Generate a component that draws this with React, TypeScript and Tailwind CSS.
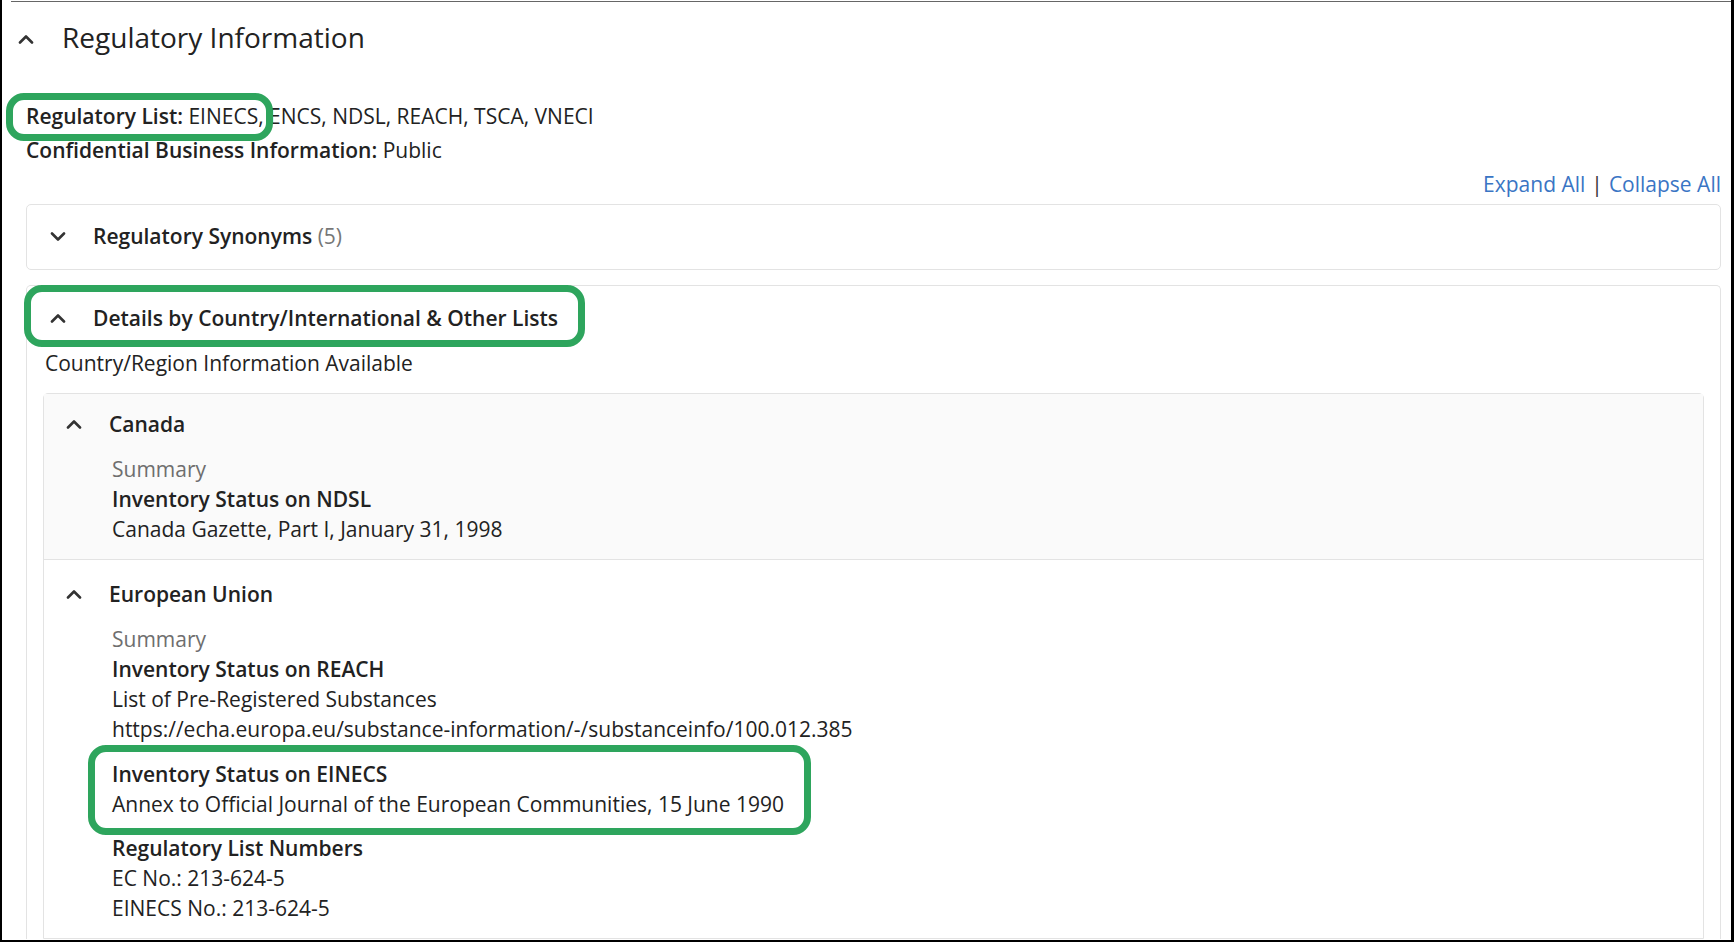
import React from "react";

function Chevron({ up = true, className = "" }: { up?: boolean; className?: string }) {
  return (
    <svg
      width="16"
      height="10"
      viewBox="0 0 16 10"
      fill="none"
      stroke="currentColor"
      strokeWidth="2.6"
      strokeLinecap="round"
      strokeLinejoin="round"
      className={className}
    >
      <path d={up ? "M2 8.5 8 2.5l6 6" : "M2 1.5l6 6 6-6"} />
    </svg>
  );
}

function Highlight({ className }: { className: string }) {
  return (
    <div
      className={`pointer-events-none absolute rounded-[18px] border-[7px] border-[#2ea55d] ${className}`}
    />
  );
}

function Entry({ title, lines }: { title: string; lines: string[] }) {
  return (
    <div>
      <div className="font-semibold">{title}</div>
      {lines.map((l) => (
        <div key={l}>{l}</div>
      ))}
    </div>
  );
}

export default function App() {
  return (
    <div className="relative h-[942px] w-full overflow-hidden border-b-2 border-l-2 border-r-[3px] border-black bg-white font-['Open_Sans',sans-serif] text-[#222]">
      <div className="ml-[9px] mt-[1px] h-px bg-[#666]" />

      <div className="pl-[24px] pr-[10px]">
        {/* section title */}
        <div className="-ml-[8px] mt-[15px] flex h-[40px] items-center">
          <Chevron className="mt-[3px] text-[#333]" />
          <h2 className="ml-[28px] text-[28px] leading-[40px]">Regulatory Information</h2>
        </div>

        {/* meta */}
        <div className="relative mt-[42px] text-[21px] leading-[34px]">
          <Highlight className="-left-[20px] -top-[6px] h-[48px] w-[267px]" />
          <div>
            <span className="font-semibold">Regulatory List:</span> EINECS, ENCS, NDSL, REACH, TSCA, VNECI
          </div>
          <div>
            <span className="font-semibold">Confidential Business Information:</span> Public
          </div>
        </div>

        <div className="flex justify-end text-[21px] leading-[34px] text-[#3a75c4]">
          <a href="#">Expand All</a>
          <span className="mx-[6px] text-[#333]">|</span>
          <a href="#">Collapse All</a>
        </div>

        {/* synonyms */}
        <div className="mt-[3px] flex h-[66px] items-center rounded-[5px] border border-[#e3e3e3] pl-[23px] text-[21px]">
          <Chevron up={false} className="text-[#333]" />
          <span className="ml-[27px] font-[550]">
            Regulatory Synonyms <span className="font-normal text-[#777]">(5)</span>
          </span>
        </div>

        {/* details */}
        <div className="relative mt-[15px] rounded-t-[5px] border border-b-0 border-[#e3e3e3] px-[16px] text-[21px] leading-[30px]">
          <Highlight className="-left-[3px] -top-px h-[62px] w-[561px]" />
          <div className="mt-[17px] flex h-[30px] items-center pl-[7px]">
            <Chevron className="text-[#333]" />
            <span className="ml-[27px] font-[550]">Details by Country/International &amp; Other Lists</span>
          </div>
          <div className="mt-[15px] pl-[2px]">Country/Region Information Available</div>

          <div className="mt-[15px] rounded-t-[5px] border border-[#e3e3e3]">
            {/* Canada */}
            <div className="border-b border-[#e3e3e3] bg-[#fafafa] pb-[15px] pt-[15px]">
              <div className="flex h-[30px] items-center pl-[22px]">
                <Chevron className="text-[#333]" />
                <span className="ml-[27px] font-[550]">Canada</span>
              </div>
              <div className="mt-[15px] pl-[68px]">
                <div className="text-[#6e6e6e]">Summary</div>
                <Entry title="Inventory Status on NDSL" lines={["Canada Gazette, Part I, January 31, 1998"]} />
              </div>
            </div>

            {/* EU */}
            <div className="pb-[15px] pt-[19px]">
              <div className="flex h-[30px] items-center pl-[22px]">
                <Chevron className="text-[#333]" />
                <span className="ml-[27px] font-[550]">European Union</span>
              </div>
              <div className="mt-[15px] pl-[68px]">
                <div className="text-[#6e6e6e]">Summary</div>
                <Entry
                  title="Inventory Status on REACH"
                  lines={[
                    "List of Pre-Registered Substances",
                    "https://echa.europa.eu/substance-information/-/substanceinfo/100.012.385",
                  ]}
                />
                <div className="relative mt-[15px]">
                  <Highlight className="-left-[24px] -top-[14px] h-[90px] w-[723px]" />
                  <Entry
                    title="Inventory Status on EINECS"
                    lines={["Annex to Official Journal of the European Communities, 15 June 1990"]}
                  />
                </div>
                <div className="mt-[14px]">
                  <Entry title="Regulatory List Numbers" lines={["EC No.: 213-624-5", "EINECS No.: 213-624-5"]} />
                </div>
              </div>
            </div>
          </div>
        </div>
      </div>
    </div>
  );
}
